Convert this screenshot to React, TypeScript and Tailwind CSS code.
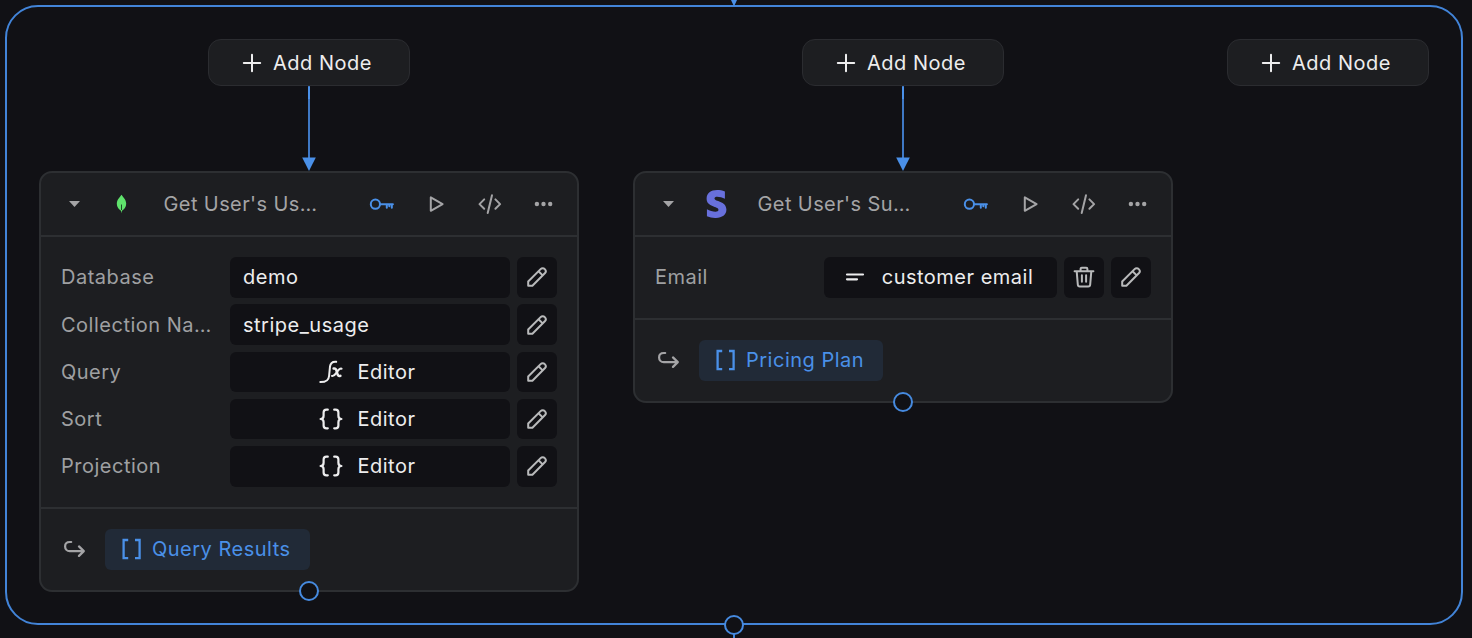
import type { ReactNode } from "react";
import { FaStripeS } from "react-icons/fa";

type IconProps = { className?: string };

function Stroke({
  w,
  h,
  sw = 2,
  className,
  children,
}: IconProps & { w: number; h: number; sw?: number; children: ReactNode }) {
  return (
    <svg
      width={w}
      height={h}
      viewBox={`0 0 ${w} ${h}`}
      fill="none"
      stroke="currentColor"
      strokeWidth={sw}
      strokeLinecap="round"
      strokeLinejoin="round"
      className={className}
    >
      {children}
    </svg>
  );
}

const PlusIcon = () => (
  <Stroke w={20} h={20}>
    <path d="M10 1.8v16.4M1.8 10h16.4" />
  </Stroke>
);

const KeyIcon = () => (
  <Stroke w={28} h={28} sw={2}>
    <circle cx="7.4" cy="14.2" r="4.6" />
    <path d="M12.3 14.2h12.6M18.8 14.2v3.600M23.800 14.2v3.600M21.300 14.2v2" />
  </Stroke>
);

const PlayIcon = () => (
  <Stroke w={28} h={28} sw={2}>
    <path d="M8.8 7.4v13.400L20.600 14.1z" />
  </Stroke>
);

const CodeIcon = () => (
  <Stroke w={28} h={28} sw={2}>
    <path d="M8.2 9.400 3.5 14.1l4.700 4.700M19.4 9.400l4.700 4.700-4.700 4.700M16 5.200l-4.300 17.800" />
  </Stroke>
);

const DotsIcon = () => (
  <svg width="28" height="28" viewBox="0 0 28 28" fill="currentColor">
    <circle cx="6.9" cy="14" r="2.200" />
    <circle cx="13.5" cy="14" r="2.200" />
    <circle cx="20.2" cy="14" r="2.200" />
  </svg>
);

const CaretIcon = () => (
  <svg width="12" height="8" viewBox="0 0 12 8" fill="currentColor">
    <path d="M0 1h11L5.500 7z" />
  </svg>
);

const LeafIcon = () => (
  <svg width="12" height="20" viewBox="0 0 12 20" fill="none">
    <path
      d="M5.500.7c1.3 2.3 4.7 4.6 4.7 9 0 3.300-2 5.700-4.200 7.100L5.500 19.200l-.5-2.400C2.800 15.400.8 13 .8 9.700.8 5.300 4.200 3 5.500.7z"
      fill="#5fe26c"
    />
    <path d="M5.500 10.500v5.500" stroke="#1d4a28" strokeWidth="1" />
  </svg>
);

const PencilIcon = () => (
  <Stroke w={20} h={20} sw={2}>
    <path d="M1.200 18.700v-4.200L13.600 2.100a2.950 2.950 0 0 1 4.200 4.200L5.400 18.700zM11.500 4.200l4.200 4.200" />
  </Stroke>
);

const TrashIcon = () => (
  <Stroke w={22} h={22} sw={2}>
    <path d="M1.600 5.200h18.800M7.600 5V2.900a1.200 1.200 0 0 1 1.200-1.200h4.400a1.200 1.200 0 0 1 1.200 1.200V5M3.700 5.300l1.100 13.200a2 2 0 0 0 2 1.900h8.400a2 2 0 0 0 2-1.900l1.100-13.200M8.900 9.300v6.500M13.100 9.300v6.500" />
  </Stroke>
);

const TextIcon = () => (
  <Stroke w={20} h={10} sw={2.200}>
    <path d="M2 2.500h16M2 7.300h10" />
  </Stroke>
);

const FxIcon = () => (
  <Stroke w={24} h={24} sw={2}>
    <path d="M17.200 1.800c-4.200-.4-5.700 1.200-6.200 4.700l-.9 9.300c-.4 4.200-2.400 6.300-8.800 6.200" />
    <path d="M14.600 8.600c2.200-.4 2.700.8 3.300 3.400.7 3 1.200 4.600 3.500 3.900" strokeWidth="2.500" />
    <path d="M22.600 8.700c-2-.6-3 .9-4.700 3.300-1.800 2.500-2.700 4.500-5 3.900" />
  </Stroke>
);

const BracesIcon = () => (
  <Stroke w={24} h={22} sw={2.200}>
    <path d="M8.800 1.700H7.500c-2 0-2.900 1-2.900 2.900v3.200c0 1.900-.8 3.200-3 3.200 2.200 0 3 1.300 3 3.200v3.200c0 1.900.9 2.900 2.900 2.900h1.300M15.200 1.700h1.300c2 0 2.900 1 2.900 2.900v3.200c0 1.900.8 3.200 3 3.200-2.200 0-3 1.300-3 3.200v3.200c0 1.900-.9 2.900-2.900 2.900h-1.300" />
  </Stroke>
);

const BracketsIcon = () => (
  <svg width="20" height="22" viewBox="0 0 20 22" fill="none" stroke="currentColor" strokeWidth="2.300">
    <path d="M7.200 2H2.600v18.200h4.600M14 2h4.600v18.200H14" />
  </svg>
);

const ReturnIcon = () => (
  <Stroke w={22} h={18} sw={2.200}>
    <path d="M8.200 2H6.800C4 2 2.100 3.800 2.100 6.400s1.900 4.700 4.700 4.700h13.700M16 6.400l4.800 4.700-4.800 4.800" />
  </Stroke>
);

function AddNode() {
  return (
    <button className="flex h-[47px] w-[202px] items-center justify-center gap-[11px] rounded-[13px] border border-[#2b2c30] bg-[#1d1e21] pr-1 text-[#ededee]">
      <PlusIcon />
      Add Node
    </button>
  );
}

function Edge() {
  return (
    <svg width="16" height="85" viewBox="0 0 16 85" className="block">
      <path d="M8 0v74" stroke="#3f78c4" strokeWidth="2" />
      <path d="M8 1v12" stroke="#4a90e8" strokeWidth="2" />
      <path d="M1.200 71.500h13.600L8 85z" fill="#4a90e8" />
    </svg>
  );
}

function Handle({ className }: IconProps) {
  return (
    <span
      className={`absolute left-1/2 size-5 -translate-x-1/2 rounded-full border-2 border-[#468adf] bg-[#111115] ${className}`}
    />
  );
}

function Row({ label, children }: { label: string; children: ReactNode }) {
  return (
    <div className="flex h-[40.500px] items-center gap-[7px]">
      <span className="w-[162px] shrink-0 text-[#9fa0a2]">{label}</span>
      {children}
    </div>
  );
}

function Field({ icon, className = "px-[13px]", children }: IconProps & { icon?: ReactNode; children: ReactNode }) {
  return (
    <div
      className={`flex h-full flex-1 items-center rounded-md bg-[#111115] text-[#ededee] ${
        icon ? "justify-center" : ""
      } ${className}`}
    >
      {icon}
      {children}
    </div>
  );
}

function Square({ children }: { children: ReactNode }) {
  return (
    <button className="flex h-full w-10 shrink-0 items-center justify-center rounded-md bg-[#111115] text-[#b9babb]">
      {children}
    </button>
  );
}

function NodeCard({
  logo,
  title,
  output,
  children,
}: {
  logo: ReactNode;
  title: string;
  output: string;
  children: ReactNode;
}) {
  return (
    <div className="relative w-[540px] rounded-[13px] border-2 border-[#2d2f32] bg-[#1d1e21]">
      <div className="flex h-[64px] items-center border-b-2 border-[#2d2f32] pr-1.5 text-[#a4a4a6]">
        <span className="flex w-[67px] justify-center">
          <CaretIcon />
        </span>
        <span className="flex w-[28px] justify-center">{logo}</span>
        <span className="ml-[27.500px] flex-1 whitespace-nowrap tracking-[0.4px]">{title}</span>
        <span className="flex w-[54px] justify-center text-[#4a90e8]">
          <KeyIcon />
        </span>
        <span className="flex w-[54px] justify-center">
          <PlayIcon />
        </span>
        <span className="flex w-[54px] justify-center">
          <CodeIcon />
        </span>
        <span className="flex w-[54px] justify-center">
          <DotsIcon />
        </span>
      </div>
      <div className="flex flex-col gap-[6.750px] border-b-2 border-[#2d2f32] px-5 py-[20px]">
        {children}
      </div>
      <div className="flex h-[81px] items-center pl-[22px]">
        <span className="text-[#a4a4a6]">
          <ReturnIcon />
        </span>
        <span className="ml-[20px] flex h-[41px] items-center gap-[11px] rounded-md bg-[#212a37] pr-[19px] pl-4 text-[#4a90e8]">
          <BracketsIcon />
          {output}
        </span>
      </div>
      <Handle className="-bottom-[11px]" />
    </div>
  );
}

function Lane({ children }: { children: ReactNode }) {
  return <div className="flex flex-col items-center">{children}</div>;
}

export default function App() {
  return (
    <main className="h-[638px] w-[1472px] overflow-hidden bg-[#111115] p-[5px] font-['Inter',sans-serif] text-[20px] leading-6 tracking-[0.5px]">
      <div className="relative flex h-[620px] w-[1458px] items-start gap-[54px] rounded-[33px] border-2 border-[#4284d8] pt-[32px] pl-[32px]">
        <svg width="12" height="8" viewBox="0 0 12 8" className="absolute -top-[7px] left-[721px]">
          <path d="M3 0h6L6 6.500z" fill="#4a90e8" />
        </svg>

        <Lane>
          <AddNode />
          <Edge />
          <NodeCard logo={<LeafIcon />} title="Get User's Us…" output="Query Results">
            <Row label="Database">
              <Field>demo</Field>
              <Square><PencilIcon /></Square>
            </Row>
            <Row label="Collection Na…">
              <Field>stripe_usage</Field>
              <Square><PencilIcon /></Square>
            </Row>
            <Row label="Query">
              <Field icon={<FxIcon />} className="gap-[15px] pr-1.5">Editor</Field>
              <Square><PencilIcon /></Square>
            </Row>
            <Row label="Sort">
              <Field icon={<BracesIcon />} className="gap-[15px] pr-1.5">Editor</Field>
              <Square><PencilIcon /></Square>
            </Row>
            <Row label="Projection">
              <Field icon={<BracesIcon />} className="gap-[15px] pr-1.5">Editor</Field>
              <Square><PencilIcon /></Square>
            </Row>
          </NodeCard>
        </Lane>

        <Lane>
          <AddNode />
          <Edge />
          <NodeCard
            logo={<FaStripeS className="h-7 w-[21px] shrink-0 text-[#6870dc]" />}
            title="Get User's Su…"
            output="Pricing Plan"
          >
            <Row label="Email">
              <Field icon={<TextIcon />} className="gap-[17px] pr-[3px]">customer email</Field>
              <Square><TrashIcon /></Square>
              <Square><PencilIcon /></Square>
            </Row>
          </NodeCard>
        </Lane>

        <Lane>
          <AddNode />
        </Lane>

        <span className="absolute -bottom-[16px] left-1/2 h-4 w-0.5 -translate-x-1/2 bg-[#4284d8]" />
        <Handle className="-bottom-[12px]" />
      </div>
    </main>
  );
}
